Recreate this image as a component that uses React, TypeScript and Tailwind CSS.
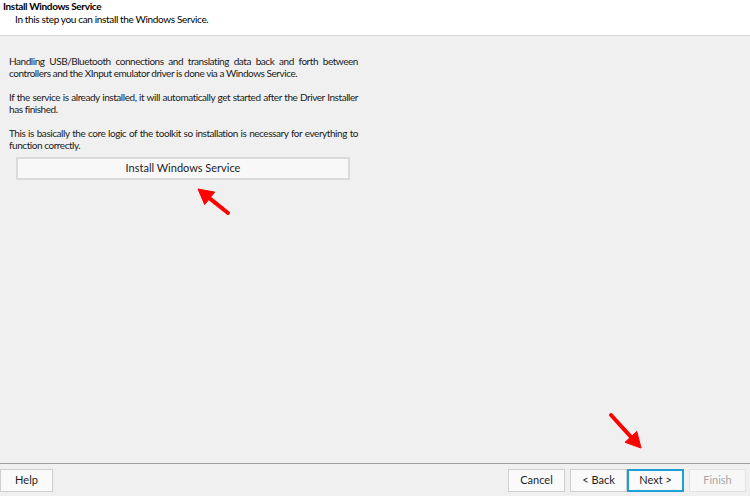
import React from "react";

const font = { fontFamily: 'Lato, "Noto Sans", sans-serif' };

function Arrow({ x1, y1, x2, y2 }: { x1: number; y1: number; x2: number; y2: number }) {
  const dx = x2 - x1;
  const dy = y2 - y1;
  const len = Math.hypot(dx, dy);
  const ux = dx / len;
  const uy = dy / len;
  const hl = 15;
  const hw = 8;
  const bx = x2 - ux * hl;
  const by = y2 - uy * hl;
  const px = -uy;
  const py = ux;
  const pts = `${x2},${y2} ${bx + px * hw},${by + py * hw} ${bx - px * hw},${by - py * hw}`;
  return (
    <>
      <line x1={x1} y1={y1} x2={bx + ux * 2} y2={by + uy * 2} stroke="#ff0000" strokeWidth={4} strokeLinecap="round" />
      <polygon points={pts} fill="#ff0000" stroke="#ff0000" strokeWidth={1} strokeLinejoin="round" />
    </>
  );
}

function Para({ full, last, className = "" }: { full: string; last: string; className?: string }) {
  return (
    <div className={className}>
      <div className="text-justify [text-align-last:justify]">{full}</div>
      <div>{last}</div>
    </div>
  );
}

export default function App() {
  const btn = "h-[23px] bg-[#fafafa] border border-[#cfcfcf] text-[11px] text-[#1e1e1e] flex items-center justify-center";
  return (
    <div className="relative w-[750px] h-[496px] bg-[#f0f0f0] flex flex-col text-[#000] overflow-hidden" style={font}>
      <div className="h-[36px] bg-white border-b border-[#d7d7d7] shrink-0 pl-[3px] pt-0 text-[10px] tracking-[-0.35px]">
        <div className="font-bold leading-[13px]">Install Windows Service</div>
        <div className="leading-[13px] pl-[12px]">In this step you can install the Windows Service.</div>
      </div>
      <div className="flex-1 pl-[9px] pt-[19px]">
        <div className="w-[349px] text-[10px] leading-[12px] tracking-[-0.45px] text-[#1a1a1a]">
          <Para
            full="Handling USB/Bluetooth connections and translating data back and forth between"
            last="controllers and the XInput emulator driver is done via a Windows Service."
          />
          <Para
            className="mt-[12px]"
            full="If the service is already installed, it will automatically get started after the Driver Installer"
            last="has finished."
          />
          <Para
            className="mt-[12px]"
            full="This is basically the core logic of the toolkit so installation is necessary for everything to"
            last="function correctly."
          />
        </div>
        <button className="mt-[6px] ml-[7px] w-[334px] h-[23px] bg-[#f8f8f8] border-2 border-[#dadada] text-[11px] text-[#1e1e1e] flex items-center justify-center">
          Install Windows Service
        </button>
      </div>
      <div className="h-[33px] border-t border-[#a0a0a0] shrink-0 flex items-start pt-[5px]">
        <button className={`w-[53px] ${btn}`}>Help</button>
        <div className="flex-1" />
        <button className={`w-[57px] ${btn}`}>Cancel</button>
        <button className={`ml-[5px] w-[57px] ${btn}`}>&lt; Back</button>
        <button className="w-[57px] h-[23px] bg-[#fafafa] border-2 border-[#1e9fd6] text-[11px] text-[#1e1e1e] flex items-center justify-center">Next &gt;</button>
        <button className="ml-[5px] mr-[4px] w-[57px] h-[23px] bg-[#f7f7f7] border border-[#e2e2e2] text-[11px] text-[#a8a8a8] flex items-center justify-center">Finish</button>
      </div>
      <svg className="absolute left-0 top-0 pointer-events-none" width={750} height={496}>
        <Arrow x1={228} y1={213} x2={198} y2={189} />
        <Arrow x1={611} y1={415} x2={641} y2={448} />
      </svg>
    </div>
  );
}
